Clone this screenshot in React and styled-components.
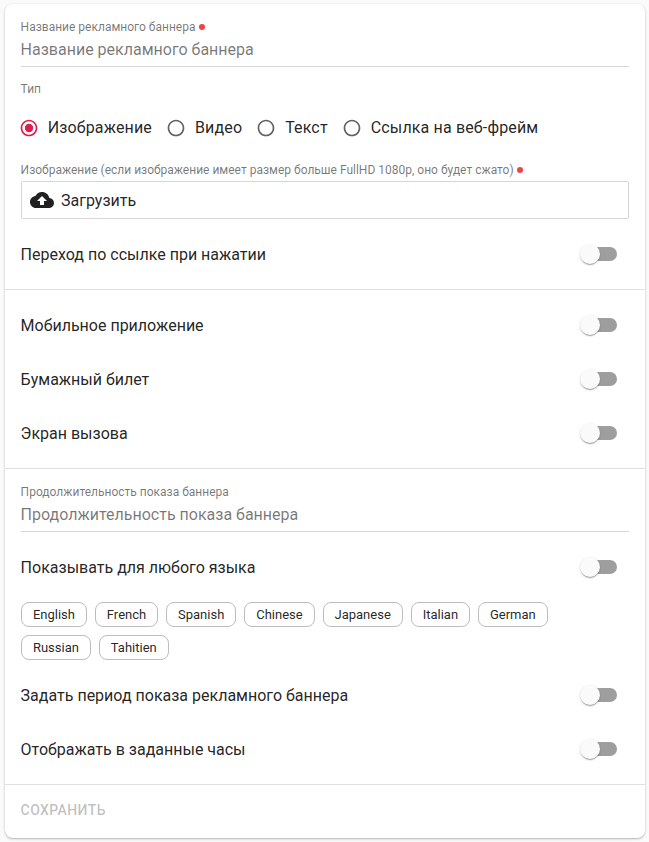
import React from "react";
import styled, { createGlobalStyle } from "styled-components";

const Global = createGlobalStyle`
  html, body { margin: 0; padding: 0; background: #fafafa; }
  body { font-family: Roboto, "Noto Sans", sans-serif; color: rgba(0,0,0,.87); }
`;
const Page = styled.div`
  width: 649px; height: 842px; box-sizing: border-box; padding: 4px 4px 4px 5px; overflow: hidden;
`;
const Card = styled.form`
  height: 834px; box-sizing: border-box; background: #fff; border-radius: 8px;
  box-shadow: 0 1px 3px rgba(0,0,0,.2), 0 1px 1px rgba(0,0,0,.1);
  display: flex; flex-direction: column;
`;
const Section = styled.section`
  padding: ${p => p.$pad || "0 16px"};
  border-bottom: ${p => p.$last ? "none" : "1px solid #e0e0e0"};
`;
const Field = styled.div`
  height: 63px; display: flex; flex-direction: column; border-bottom: 1px solid #d6d6d6;
  box-sizing: border-box;
`;
const SmallLabel = styled.div`
  font-size: 12px; line-height: 14px; color: rgba(0,0,0,.54); height: 14px; margin-left: -.4px;
  margin-top: ${p => p.$mt || 0}px;
`;
const Dot = styled.span`
  display: inline-block; width: 6px; height: 6px; border-radius: 50%; background: #ef4444;
  margin-left: 3.4px; vertical-align: 1px;
`;
const Placeholder = styled.div`
  font-size: 16px; line-height: 20px; color: rgba(0,0,0,.54); margin-top: 6px; margin-left: -.4px;
`;
const RadioRow = styled.div`
  display: flex; align-items: center; height: 24px; margin-top: ${p => p.$mt}px;
`;
const RadioItem = styled.label`
  display: flex; align-items: center; margin-right: 16.3px;
`;
const RadioIcon = styled.svg`
  width: 20px; height: 20px; margin: 1px 8.7px 0 -2px; flex: none; fill: ${p => p.$on ? "#dc1f4f" : "#616161"};
`;
const BodyText = styled.span`
  font-size: 16px; line-height: 24px; letter-spacing: ${p => p.$ls || 0}px; position: relative; top: 1px;
  margin-left: ${p => p.$ml ?? -0.4}px;
`;
const Upload = styled.div`
  height: 38px; box-sizing: border-box; border: 1px solid #d6d6d6; border-radius: 2px; margin-top: 4px;
  display: flex; align-items: center; padding-left: 8px; gap: 7px;
`;
const ToggleRow = styled.div`
  height: ${p => p.$h || 54}px; display: flex; align-items: center; justify-content: space-between;
  padding-right: 12px;
`;
const SwitchWrap = styled.span`
  position: relative; width: 34px; height: 14px; background: #9e9e9e; border-radius: 7px; display: block;
  &::after { content: ""; position: absolute; left: -3px; top: -3px; width: 20px; height: 20px; border-radius: 50%; background: #fafafa;
    box-shadow: 0 2px 1px -1px rgba(0,0,0,.2), 0 1px 1px rgba(0,0,0,.14), 0 1px 3px rgba(0,0,0,.12); }
`;
const Chips = styled.div`
  display: flex; flex-wrap: wrap; gap: 8px; padding-right: 40px;
`;
const Chip = styled.span`
  height: 25px; box-sizing: border-box; border: 1px solid #bdbdbd; border-radius: 8px; padding: 0 10.93px;
  font-size: 13px; line-height: 23px; color: rgba(0,0,0,.87);
`;
const Save = styled.button`
  all: unset; font-family: Roboto, sans-serif; font-weight: 500; font-size: 14px; line-height: 20px; letter-spacing: .4px;
  color: rgba(0,0,0,.26); text-transform: uppercase; margin-top: 15px; margin-left: -.4px;
`;

const Switch = () => <SwitchWrap />;
const Toggle = ({ children, h }) => (
  <ToggleRow $h={h}><BodyText>{children}</BodyText><Switch /></ToggleRow>
);
const Radio = ({ on, children }) => (
  <RadioItem>
    <RadioIcon $on={on} viewBox="0 0 24 24">
      <path d="M12 2C6.48 2 2 6.48 2 12s4.48 10 10 10 10-4.48 10-10S17.52 2 12 2zm0 18c-4.42 0-8-3.58-8-8s3.58-8 8-8 8 3.58 8 8-3.58 8-8 8z" />
      {on && <circle cx="12" cy="12" r="5" />}
    </RadioIcon>
    <BodyText $ls={0.15} $ml={0}>{children}</BodyText>
  </RadioItem>
);
const Cloud = () => (
  <svg width="24" height="24" viewBox="0 0 24 24" fill="#212121">
    <path d="M19.35 10.04C18.67 6.59 15.64 4 12 4 9.11 4 6.6 5.64 5.35 8.04 2.34 8.36 0 10.91 0 14c0 3.31 2.69 6 6 6h13c2.76 0 5-2.24 5-5 0-2.64-2.05-4.78-4.65-4.96zM14 13v4h-4v-4H7l5-5 5 5h-3z" />
  </svg>
);
const langs = ["English","French","Spanish","Chinese","Japanese","Italian","German","Russian","Tahitien"];

export default function App() {
  return (
    <Page>
      <Global />
      <Card>
        <Section>
          <Field>
            <SmallLabel $mt={16}>Название рекламного баннера<Dot /></SmallLabel>
            <Placeholder>Название рекламного баннера</Placeholder>
          </Field>
          <SmallLabel $mt={15}>Тип</SmallLabel>
          <RadioRow $mt={19}>
            <Radio on>Изображение</Radio>
            <Radio>Видео</Radio>
            <Radio>Текст</Radio>
            <Radio>Ссылка на веб-фрейм</Radio>
          </RadioRow>
          <SmallLabel $mt={24}>Изображение (если изображение имеет размер больше FullHD 1080p, оно будет сжато)<Dot /></SmallLabel>
          <Upload><Cloud /><BodyText $ml={0}>Загрузить</BodyText></Upload>
          <Toggle h={70}>Переход по ссылке при нажатии</Toggle>
        </Section>
        <Section $pad="8px 16px">
          <Toggle>Мобильное приложение</Toggle>
          <Toggle>Бумажный билет</Toggle>
          <Toggle>Экран вызова</Toggle>
        </Section>
        <Section $pad="0 16px 16px">
          <Field>
            <SmallLabel $mt={16}>Продолжительность показа баннера</SmallLabel>
            <Placeholder>Продолжительность показа баннера</Placeholder>
          </Field>
          <Toggle h={70}>Показывать для любого языка</Toggle>
          <Chips>
            {langs.map(l => <Chip key={l}>{l}</Chip>)}
          </Chips>
          <Toggle h={70}>Задать период показа рекламного баннера</Toggle>
          <Toggle h={38}>Отображать в заданные часы</Toggle>
        </Section>
        <Section $last>
          <Save type="button">Сохранить</Save>
        </Section>
      </Card>
    </Page>
  );
}
